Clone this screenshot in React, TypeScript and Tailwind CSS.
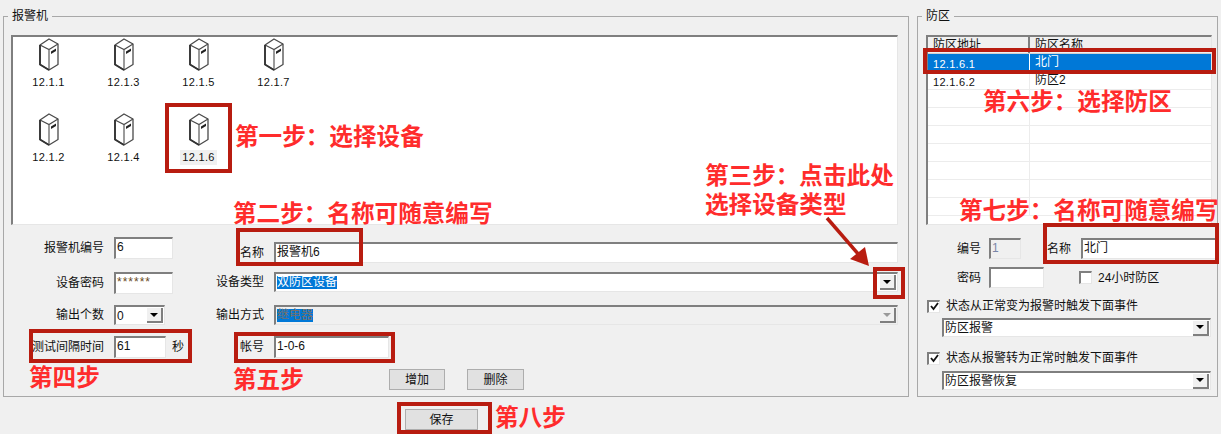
const sunken = "border-t-2 border-l-2 border-t-[#7f7f7f] border-l-[#7f7f7f] border-r border-b border-r-[#e6e6e6] border-b-[#e6e6e6]";

const ServerIcon = () => (
    <svg width="20" height="33" viewBox="0 0 20 33" fill="none" className="block">
        <path d="M1 7 L10 1 L19 6 V26.5 L10 32 L1 26.5 Z" fill="#fff" stroke="#4a4a4a" strokeWidth="1.3" strokeLinejoin="round" />
        <path d="M1 7 L10 11.5 L19 6 M10 11.5 V32" stroke="#4a4a4a" strokeWidth="1.1" />
        <path d="M1 7 V26.5 L10 32" stroke="#333" strokeWidth="1.8" />
        <path d="M12 13.5 L17 10.5 V13 L12 16 Z" fill="#222" />
    </svg>
);

const Device = ({ name, active }: { name: string; active?: boolean }) => (
    <div className="flex flex-col items-center">
        <ServerIcon />
        <span className={`mt-[4px] px-[2px] h-[15px] leading-[15px] text-[11px] tracking-[0.3px] text-[#111] ${active ? "bg-[#f0f0f0]" : ""}`}>{name}</span>
    </div>
);

const TextBox = ({ value, className, muted }: { value?: string; className: string; muted?: boolean }) => (
    <div className={`${sunken} ${muted ? "bg-[#f0f0f0] text-[#7a86a8]" : "bg-white text-[#111]"} pl-[1px] text-[12px] leading-[17px] ${className}`}>{value}</div>
);

const ArrowButton = ({ disabled }: { disabled?: boolean }) => (
    <div className="flex h-[15px] w-[16px] items-center justify-center bg-[#f0f0f0] border-r-2 border-b-2 border-r-[#7f7f7f] border-b-[#7f7f7f]">
        <div className={`h-0 w-0 border-x-[4px] border-t-[4px] border-x-transparent ${disabled ? "border-t-[#9a9a9a]" : "border-t-black"}`} />
    </div>
);

const Combo = ({ children, className, disabled }: { children?: React.ReactNode; className: string; disabled?: boolean }) => (
    <div className={`${sunken} ${disabled ? "bg-[#f0f0f0]" : "bg-white"} flex items-center justify-between pl-[1px] pr-[1px] text-[12px] text-[#111] ${className}`}>
        <span className="flex items-center">{children}</span>
        <ArrowButton disabled={disabled} />
    </div>
);

const Selected = ({ text, muted }: { text: string; muted?: boolean }) => (
    <span className={`bg-[#0078d7] h-[13px] leading-[13px] ${muted ? "text-[#77716b]" : "text-white"}`}>{text}</span>
);

const Button = ({ label, className }: { label: string; className: string }) => (
    <div className={`flex items-center justify-center bg-[#e1e1e1] border border-[#adadad] text-[12px] text-[#111] ${className}`}>{label}</div>
);

const Check = ({ checked }: { checked?: boolean }) => (
    <div className={`h-[13px] w-[13px] shrink-0 bg-white ${sunken} flex items-center justify-center`}>
        {checked && (
            <svg width="9" height="9" viewBox="0 0 9 9" fill="none">
                <path d="M1 4 L3.5 7 L8 1" stroke="#111" strokeWidth="1.8" />
            </svg>
        )}
    </div>
);

const LeftRow = ({ label, className, children }: { label: string; className: string; children: React.ReactNode }) => (
    <div className={`flex items-center ${className}`}>
        <span className="w-[100px] shrink-0 whitespace-nowrap text-right text-[12px] text-[#111]">{label}</span>
        <div className="ml-[10px] flex items-center">{children}</div>
    </div>
);

const RightRow = ({ label, className, children }: { label: string; className: string; children: React.ReactNode }) => (
    <div className={`flex items-center ${className}`}>
        <span className="w-[70px] shrink-0 text-right text-[12px] text-[#111]">{label}</span>
        <div className="ml-[10px] flex flex-1 items-center">{children}</div>
    </div>
);

const Box = ({ className }: { className: string }) => (
    <div className={`absolute border-[4px] border-[#b81c10] ${className}`} />
);

const Note = ({ text, className }: { text: string; className: string }) => (
    <div className={`absolute whitespace-nowrap text-[23.6px] leading-[28px] font-bold text-[#ff2c2c] ${className}`}>{text}</div>
);

export default function App() {
    return (
        <div className="relative h-[434px] w-[1221px] overflow-hidden bg-[#f0f0f0] font-['Liberation_Sans','Noto_Sans_CJK_SC',sans-serif]">
            <div className="flex items-start pl-[3px] pt-[8px]">
                {/* 报警机 */}
                <fieldset className="h-[389px] w-[906px] border border-[#a8a8a8]">
                    <legend className="ml-[4px] px-[4px] text-[12px] leading-[16px] text-[#111]">报警机</legend>
                    <div className={`ml-[7px] mt-[11px] h-[190px] w-[887px] bg-white ${sunken}`}>
                        <div className="-ml-[2px] grid grid-cols-[repeat(4,75px)] grid-rows-[75px_75px] pt-[1px]">
                            {["12.1.1", "12.1.3", "12.1.5", "12.1.7"].map((n) => <Device key={n} name={n} />)}
                            <Device name="12.1.2" />
                            <Device name="12.1.4" />
                            <Device name="12.1.6" active />
                        </div>
                    </div>
                    <div className="flex">
                        <div className="w-[190px] pt-[12px]">
                            <LeftRow label="报警机编号" className="h-[22px]"><TextBox value="6" className="h-[22px] w-[59px]" /></LeftRow>
                            <LeftRow label="设备密码" className="mt-[13px] h-[22px]"><TextBox value="******" className="h-[22px] w-[59px] tracking-[1px] !text-[#6a4a22]" /></LeftRow>
                            <LeftRow label="输出个数" className="mt-[11px] h-[20px]">
                                <Combo className="h-[20px] w-[51px]">0</Combo>
                            </LeftRow>
                            <LeftRow label="测试间隔时间" className="mt-[11px] h-[22px]">
                                <TextBox value="61" className="h-[22px] w-[52px]" />
                                <span className="ml-[6px] text-[12px] text-[#111]">秒</span>
                            </LeftRow>
                        </div>
                        <div className="w-[704px] pt-[17px]">
                            <RightRow label="名称" className="h-[21px]"><TextBox value="报警机6" className="h-[21px] w-full" /></RightRow>
                            <RightRow label="设备类型" className="mt-[9px] h-[20px]">
                                <Combo className="h-[20px] w-full"><Selected text="双防区设备" /></Combo>
                            </RightRow>
                            <RightRow label="输出方式" className="mt-[13px] h-[20px]">
                                <Combo className="h-[20px] w-full" disabled><Selected text="继电器" muted /></Combo>
                            </RightRow>
                            <RightRow label="帐号" className="mt-[11px] h-[22px]"><TextBox value="1-0-6" className="h-[22px] w-[115px]" /></RightRow>
                            <div className="mt-[11px] flex pl-[195px]">
                                <Button label="增加" className="h-[21px] w-[56px]" />
                                <Button label="删除" className="ml-[22px] h-[21px] w-[57px]" />
                            </div>
                        </div>
                    </div>
                </fieldset>

                {/* 防区 */}
                <fieldset className="ml-[8px] h-[389px] w-[301px] border border-[#a8a8a8]">
                    <legend className="ml-[4px] px-[4px] text-[12px] leading-[16px] text-[#111]">防区</legend>
                    <div className={`ml-[8px] mt-[11px] h-[190px] w-[286px] overflow-hidden bg-white ${sunken}`}>
                        <div className="flex h-[17px] bg-[#f0f0f0] text-[12px] leading-[16px] text-[#111] border-b border-b-[#d0d0d0]">
                            <span className="w-[102px] border-r-2 border-r-[#7f7f7f] pl-[5px]">防区地址</span>
                            <span className="pl-[5px]">防区名称</span>
                        </div>
                        {[
                            ["12.1.6.1", "北门"],
                            ["12.1.6.2", "防区2"],
                            ["", ""],
                            ["", ""],
                            ["", ""],
                            ["", ""],
                            ["", ""],
                            ["", ""],
                            ["", ""],
                        ].map(([addr, name], i) => (
                            <div key={i} className={`flex h-[18px] text-[12px] border-b border-b-[#ececec] ${i === 0 ? "bg-[#0078d7] text-white" : "text-[#111]"}`}>
                                <span className={`w-[102px] pl-[5px] text-[11px] leading-[20px] tracking-[0.3px] border-r ${i === 0 ? "border-r-white" : "border-r-[#ececec]"}`}>{addr}</span>
                                <span className="pl-[5px] leading-[16px]">{name}</span>
                            </div>
                        ))}
                    </div>
                    <div className="mt-[13px] flex h-[21px] items-center">
                        <span className="w-[63px] pt-[1px] text-right text-[12px] text-[#111]">编号</span>
                        <TextBox value="1" muted className="ml-[8px] h-[21px] w-[32px]" />
                        <span className="ml-[26px] pt-[1px] text-[12px] text-[#111]">名称</span>
                        <TextBox value="北门" className="ml-[10px] h-[21px] w-[136px]" />
                    </div>
                    <div className="mt-[8px] flex h-[21px] items-center">
                        <span className="w-[63px] text-right text-[12px] text-[#111]">密码</span>
                        <TextBox className="ml-[8px] h-[21px] w-[55px]" />
                        <div className="ml-[35px]"><Check /></div>
                        <span className="ml-[6px] text-[12px] text-[#111]">24小时防区</span>
                    </div>
                    <div className="mt-[10px] flex h-[16px] items-center pl-[9px]">
                        <Check checked />
                        <span className="ml-[6px] text-[12px] text-[#111]">状态从正常变为报警时触发下面事件</span>
                    </div>
                    <Combo className="ml-[24px] mt-[4px] h-[19px] w-[269px]">防区报警</Combo>
                    <div className="mt-[13px] flex h-[16px] items-center pl-[9px]">
                        <Check checked />
                        <span className="ml-[6px] text-[12px] text-[#111]">状态从报警转为正常时触发下面事件</span>
                    </div>
                    <Combo className="ml-[24px] mt-[5px] h-[19px] w-[269px]">防区报警恢复</Combo>
                </fieldset>
            </div>

            <div className="flex pl-[405px] pt-[12px]">
                <Button label="保存" className="h-[21px] w-[73px]" />
            </div>

            {/* 标注 */}
            <Box className="left-[165px] top-[103px] h-[70px] w-[67px]" />
            <Box className="left-[236px] top-[228px] h-[38px] w-[127px]" />
            <Box className="left-[873px] top-[267px] h-[32px] w-[32px]" />
            <Box className="left-[29px] top-[329px] h-[34px] w-[163px]" />
            <Box className="left-[234px] top-[332px] h-[31px] w-[161px]" />
            <Box className="left-[397px] top-[402px] h-[32px] w-[95px]" />
            <Box className="left-[923px] top-[48px] h-[26px] w-[293px]" />
            <Box className="left-[1043px] top-[223px] h-[41px] w-[176px]" />

            <Note text="第一步：选择设备" className="left-[235px] top-[123px]" />
            <Note text="第二步：名称可随意编写" className="left-[233px] top-[200px]" />
            <Note text="第三步：点击此处" className="left-[705px] top-[162px]" />
            <Note text="选择设备类型" className="left-[705px] top-[191px]" />
            <Note text="第四步" className="left-[29px] top-[364px]" />
            <Note text="第五步" className="left-[233px] top-[366px]" />
            <Note text="第六步：选择防区" className="left-[983px] top-[88px]" />
            <Note text="第七步：名称可随意编写" className="left-[959px] top-[197px]" />
            <Note text="第八步" className="left-[495px] top-[404px]" />

            <svg className="absolute left-[820px] top-[212px]" width="56" height="60" viewBox="0 0 56 60" fill="none">
                <path d="M7 6 L46 51" stroke="#b81c10" strokeWidth="3.5" />
                <path d="M49 54 L30 47 L45 35 Z" fill="#b81c10" />
            </svg>
        </div>
    );
}
